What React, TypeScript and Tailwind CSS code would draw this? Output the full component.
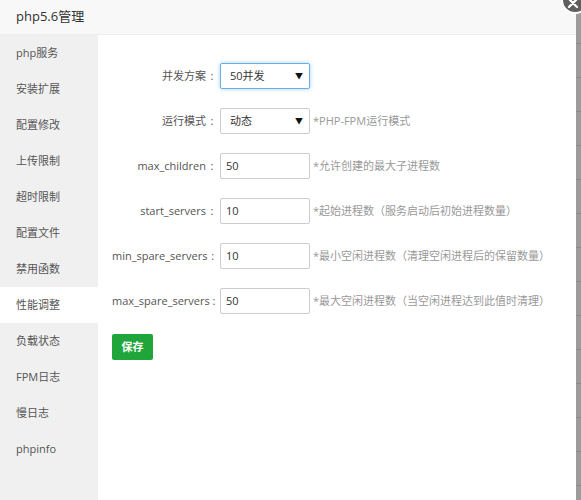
import React from "react";

const font = { fontFamily: '"Open Sans", "Noto Sans CJK SC", sans-serif' };

const menu = [
  "php服务",
  "安装扩展",
  "配置修改",
  "上传限制",
  "超时限制",
  "配置文件",
  "禁用函数",
  "性能调整",
  "负载状态",
  "FPM日志",
  "慢日志",
  "phpinfo",
];

function Row({ label, children, hint }: { label: string; children: React.ReactNode; hint?: string }) {
  return (
    <div className="flex items-center h-[26px] mb-[19px]">
      <div className="w-[106px] flex justify-end items-center whitespace-nowrap text-[11px] text-[#555]">
        <span>{label}</span>
        <span className="inline-block w-[12px] text-center">:</span>
      </div>
      <div className="ml-[2px]">{children}</div>
      {hint && <div className="ml-[3px] whitespace-nowrap text-[11px] text-[#999]">{hint}</div>}
    </div>
  );
}

function Select({ value, focus }: { value: string; focus?: boolean }) {
  return (
    <div
      className={
        "w-[90px] h-[26px] flex items-center justify-between pl-[9px] pr-[6px] bg-white rounded-[2px] text-[11px] text-[#333] " +
        (focus ? "border border-[#66afe9] shadow-[0_0_4px_rgba(102,175,233,0.6)]" : "border border-[#ccc]")
      }
    >
      <span>{value}</span>
      <span className="text-[8px] text-[#111]">▼</span>
    </div>
  );
}

function Input({ value }: { value: string }) {
  return (
    <div className="w-[90px] h-[26px] flex items-center px-[5px] bg-white border border-[#ccc] rounded-[2px] text-[11px] text-[#333]">
      {value}
    </div>
  );
}

export default function App() {
  return (
    <div className="relative w-[581px] h-[500px] overflow-hidden bg-white" style={font}>
      <div className="flex h-full">
        <div className="w-[576px] h-full flex flex-col bg-white shadow-[1px_0_4px_rgba(0,0,0,0.2)]">
          <div className="h-[35px] shrink-0 bg-[#f8f8f8] border-b border-[#eee] flex items-center pl-[16px] text-[13px] text-[#333]">
            php5.6管理
          </div>
          <div className="flex flex-1">
            <div className="w-[98px] bg-[#f0f0f0] flex flex-col">
              {menu.map((m) => (
                <div
                  key={m}
                  className={
                    "h-[36px] flex items-center pl-[16px] text-[11px] text-[#555] " +
                    (m === "性能调整" ? "bg-white" : "")
                  }
                >
                  {m}
                </div>
              ))}
            </div>
            <div className="flex-1 pt-[28px] pl-[14px]">
              <Row label="并发方案">
                <Select value="50并发" focus />
              </Row>
              <Row label="运行模式" hint="*PHP-FPM运行模式">
                <Select value="动态" />
              </Row>
              <Row label="max_children" hint="*允许创建的最大子进程数">
                <Input value="50" />
              </Row>
              <Row label="start_servers" hint="*起始进程数（服务启动后初始进程数量）">
                <Input value="10" />
              </Row>
              <Row label="min_spare_servers" hint="*最小空闲进程数（清理空闲进程后的保留数量）">
                <Input value="10" />
              </Row>
              <Row label="max_spare_servers" hint="*最大空闲进程数（当空闲进程达到此值时清理）">
                <Input value="50" />
              </Row>
              <button className="w-[41px] h-[26px] bg-[#20a53a] rounded-[2px] text-white text-[11px] font-bold">
                保存
              </button>
            </div>
          </div>
        </div>
        <div className="flex-1 h-full bg-[#9c9c9c] flex flex-col pt-[10px]">
          {Array.from({ length: 15 }).map((_, i) => (
            <div key={i} className="h-[34px] shrink-0 border-b border-[#8a8a8a]" />
          ))}
        </div>
      </div>
      <div className="absolute left-[561px] top-[-14px] w-[28px] h-[28px] rounded-full bg-[#5f5f5f] border-2 border-white flex items-center justify-center">
        <svg width="12" height="12" viewBox="0 0 12 12" className="mt-[6px] mr-[4px]">
          <path d="M2 2L10 10M10 2L2 10" stroke="white" strokeWidth="2.2" strokeLinecap="round" />
        </svg>
      </div>
    </div>
  );
}
